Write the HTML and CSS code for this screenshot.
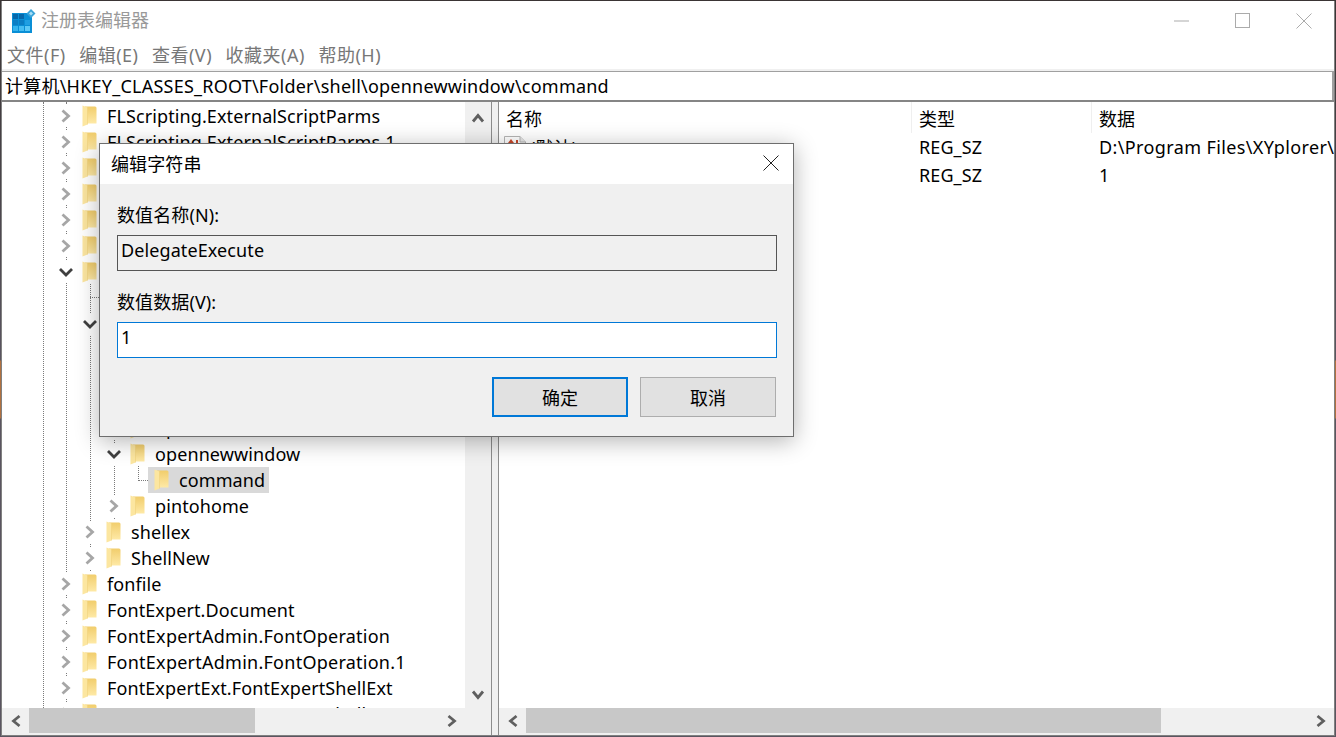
FILE: index.html
```html
<!DOCTYPE html>
<html lang="zh-CN">
<head>
<meta charset="utf-8">
<title>注册表编辑器</title>
<link rel="stylesheet" href="styles.css">
</head>
<body>
<svg class="defs" width="0" height="0" aria-hidden="true">
  <defs>
    <linearGradient id="fb" x1="0" y1="0" x2="0" y2="1"><stop offset="0" stop-color="#f1cd6c"/><stop offset="1" stop-color="#fee9a6"/></linearGradient>
    <symbol id="folder" viewBox="0 0 15 22">
      <path d="M3 1.500H13Q14.500 1.500 14.500 3V18.500H3Z" fill="url(#fb)"/>
      <path d="M.5 .5L5.500 2.500V19.500L.5 21.500Z" fill="#fce6a0"/>
      <path d="M5.500 2.500V19.500" stroke="#f0d27c" stroke-width=".6" fill="none"/>
    </symbol>
    <symbol id="right" viewBox="0 0 12 14"><path d="M2.500 1.500L8.500 7L2.500 12.500" fill="none" stroke="#a6a6a6" stroke-width="2.800"/></symbol>
    <symbol id="down" viewBox="0 0 16 10"><path d="M2 2L8 8L14 2" fill="none" stroke="#404040" stroke-width="2.800"/></symbol>
    <symbol id="sb-l" viewBox="0 0 12 14"><path d="M9.500 2L3.500 7L9.500 12" fill="none" stroke="#5f5f5f" stroke-width="2.800"/></symbol>
    <symbol id="sb-r" viewBox="0 0 12 14"><path d="M2.500 2L8.500 7L2.500 12" fill="none" stroke="#5f5f5f" stroke-width="2.800"/></symbol>
    <symbol id="sb-u" viewBox="0 0 14 12"><path d="M2 9.500L7 3.500L12 9.500" fill="none" stroke="#5f5f5f" stroke-width="2.800"/></symbol>
    <symbol id="sb-d" viewBox="0 0 14 12"><path d="M2 2.500L7 8.500L12 2.500" fill="none" stroke="#5f5f5f" stroke-width="2.800"/></symbol>
  </defs>
</svg>

<div class="window">
  <header class="titlebar">
    <svg class="appicon" viewBox="0 0 24 24" width="24" height="24">
      <rect x="0" y="4" width="20" height="20" fill="#0a8fd6"/>
      <rect x="1" y="5" width="5" height="5" fill="#0668ab"/><rect x="7" y="5" width="5" height="5" fill="#0668ab"/><rect x="13" y="5" width="5" height="5" fill="#0a8fd6"/>
      <rect x="1" y="11" width="5" height="5" fill="#0b7ec4"/><rect x="7" y="11" width="5" height="5" fill="#0b7ec4"/><rect x="13" y="11" width="5" height="5" fill="#1f9fe2"/>
      <rect x="1" y="17" width="5" height="5" fill="#35b4ee"/><rect x="7" y="17" width="5" height="5" fill="#45bdf2"/><rect x="13" y="17" width="5" height="5" fill="#5cc9f6"/>
      <path d="M19 0L23.500 4.500L19 9L14.500 4.500Z" fill="#3aa3d8"/><path d="M19 2.500L21 4.500L19 6.500L17 4.500Z" fill="#a8def5"/>
    </svg>
    <span class="apptitle">注册表编辑器</span>
    <div class="wincontrols">
      <span class="winbtn"><svg viewBox="0 0 16 16" width="16" height="16"><path d="M0 8H15" stroke="#ababab"/></svg></span>
      <span class="winbtn"><svg viewBox="0 0 16 16" width="16" height="16"><rect x=".5" y=".5" width="14" height="14" fill="none" stroke="#ababab"/></svg></span>
      <span class="winbtn"><svg viewBox="0 0 16 16" width="16" height="16"><path d="M.5 .5L15.500 15.500M15.500 .5L.5 15.500" stroke="#ababab" fill="none"/></svg></span>
    </div>
  </header>

  <nav class="menubar">
    <span class="menu">文件(F)</span>
    <span class="menu">编辑(E)</span>
    <span class="menu">查看(V)</span>
    <span class="menu">收藏夹(A)</span>
    <span class="menu">帮助(H)</span>
  </nav>

  <div class="address">计算机\HKEY_CLASSES_ROOT\Folder\shell\opennewwindow\command</div>

  <main class="panes">
    <section class="treepane">
      <div class="treebody">
        <div class="tree">
          <i class="guide g43"></i><i class="guide g66"></i><i class="guide g90"></i><i class="guide g114"></i><i class="guide g138"></i>
          <i class="hguide h298"></i><i class="hguide h481"></i>

          <div class="row l1"><span class="chev"><svg width="12" height="14"><use href="#right"/></svg></span><svg class="folder"><use href="#folder"/></svg><span class="name">FLScripting.ExternalScriptParms</span></div>
          <div class="row l1"><span class="chev"><svg width="12" height="14"><use href="#right"/></svg></span><svg class="folder"><use href="#folder"/></svg><span class="name">FLScripting.ExternalScriptParms.1</span></div>
          <div class="row l1"><span class="chev"><svg width="12" height="14"><use href="#right"/></svg></span><svg class="folder"><use href="#folder"/></svg></div>
          <div class="row l1"><span class="chev"><svg width="12" height="14"><use href="#right"/></svg></span><svg class="folder"><use href="#folder"/></svg></div>
          <div class="row l1"><span class="chev"><svg width="12" height="14"><use href="#right"/></svg></span><svg class="folder"><use href="#folder"/></svg></div>
          <div class="row l1"><span class="chev"><svg width="12" height="14"><use href="#right"/></svg></span><svg class="folder"><use href="#folder"/></svg></div>
          <div class="row l1"><span class="chev"><svg width="16" height="10"><use href="#down"/></svg></span><svg class="folder"><use href="#folder"/></svg></div>
          <div class="row l2"></div>
          <div class="row l2"><span class="chev"><svg width="16" height="10"><use href="#down"/></svg></span></div>
          <div class="row"></div>
          <div class="row"></div>
          <div class="row"></div>
          <div class="row l3"><span class="chev"></span><svg class="folder"><use href="#folder"/></svg><span class="name">open</span></div>
          <div class="row l3"><span class="chev"><svg width="16" height="10"><use href="#down"/></svg></span><svg class="folder"><use href="#folder"/></svg><span class="name">opennewwindow</span></div>
          <div class="row l4"><span class="sel"><svg class="folder"><use href="#folder"/></svg><span class="name">command</span></span></div>
          <div class="row l3"><span class="chev"><svg width="12" height="14"><use href="#right"/></svg></span><svg class="folder"><use href="#folder"/></svg><span class="name">pintohome</span></div>
          <div class="row l2"><span class="chev"><svg width="12" height="14"><use href="#right"/></svg></span><svg class="folder"><use href="#folder"/></svg><span class="name">shellex</span></div>
          <div class="row l2"><span class="chev"><svg width="12" height="14"><use href="#right"/></svg></span><svg class="folder"><use href="#folder"/></svg><span class="name">ShellNew</span></div>
          <div class="row l1"><span class="chev"><svg width="12" height="14"><use href="#right"/></svg></span><svg class="folder"><use href="#folder"/></svg><span class="name">fonfile</span></div>
          <div class="row l1"><span class="chev"><svg width="12" height="14"><use href="#right"/></svg></span><svg class="folder"><use href="#folder"/></svg><span class="name">FontExpert.Document</span></div>
          <div class="row l1"><span class="chev"><svg width="12" height="14"><use href="#right"/></svg></span><svg class="folder"><use href="#folder"/></svg><span class="name wide">FontExpertAdmin.FontOperation</span></div>
          <div class="row l1"><span class="chev"><svg width="12" height="14"><use href="#right"/></svg></span><svg class="folder"><use href="#folder"/></svg><span class="name wide">FontExpertAdmin.FontOperation.1</span></div>
          <div class="row l1"><span class="chev"><svg width="12" height="14"><use href="#right"/></svg></span><svg class="folder"><use href="#folder"/></svg><span class="name">FontExpertExt.FontExpertShellExt</span></div>
          <div class="row l1"><span class="chev"><svg width="12" height="14"><use href="#right"/></svg></span><svg class="folder"><use href="#folder"/></svg><span class="name">FontExpertExt.FontExpertShellExt.1</span></div>
        </div>
        <div class="vscroll">
          <svg width="14" height="12"><use href="#sb-u"/></svg>
          <svg width="14" height="12"><use href="#sb-d"/></svg>
        </div>
      </div>
      <div class="hscroll hscroll-tree">
        <span class="sbarrow"><svg width="12" height="14"><use href="#sb-l"/></svg></span>
        <span class="track"><span class="thumb tree-thumb"></span></span>
        <span class="sbarrow"><svg width="12" height="14"><use href="#sb-r"/></svg></span>
      </div>
    </section>

    <div class="splitter"></div>

    <section class="listpane">
      <div class="list">
        <div class="lrow head">
          <span class="cell">名称</span><span class="cell">类型</span><span class="cell">数据</span>
        </div>
        <div class="lrow">
          <span class="cell icell">
            <svg class="regicon" viewBox="0 0 22 22" width="22" height="22">
              <path d="M.5 .5H16L21.500 6V21.500H.5Z" fill="#fff" stroke="#b5b5b5"/>
              <path d="M16 .5V6H21.500" fill="#e8e8e8" stroke="#b5b5b5"/>
              <path d="M4 7L7 3L10 7ZM12 4H14V8H12Z" fill="#c9482a"/>
            </svg>
            <span>(默认)</span>
          </span>
          <span class="cell">REG_SZ</span>
          <span class="cell path">D:\Program Files\XYplorer\XYplorer.exe</span>
        </div>
        <div class="lrow">
          <span class="cell icell">
            <svg class="regicon" viewBox="0 0 22 22" width="22" height="22">
              <path d="M.5 .5H16L21.500 6V21.500H.5Z" fill="#fff" stroke="#b5b5b5"/>
            </svg>
            <span>DelegateExecute</span>
          </span>
          <span class="cell">REG_SZ</span>
          <span class="cell">1</span>
        </div>
      </div>
      <div class="hscroll">
        <span class="sbarrow"><svg width="12" height="14"><use href="#sb-l"/></svg></span>
        <span class="track"><span class="thumb list-thumb"></span></span>
        <span class="sbarrow"><svg width="12" height="14"><use href="#sb-r"/></svg></span>
      </div>
    </section>
  </main>
</div>

<div class="dialog" role="dialog">
  <div class="dlgtitle">
    <span>编辑字符串</span>
    <svg class="dlgclose" viewBox="0 0 16 16" width="16" height="16"><path d="M.5 .5L15.500 15.500M15.500 .5L.5 15.500" stroke="#222" fill="none"/></svg>
  </div>
  <div class="dlgbody">
    <div class="label first">数值名称(N):</div>
    <div class="field readonly">DelegateExecute</div>
    <div class="label second">数值数据(V):</div>
    <div class="field active">1</div>
    <div class="buttons">
      <span class="btn primary">确定</span>
      <span class="btn">取消</span>
    </div>
  </div>
</div>
</body>
</html>
```

FILE: styles.css
```css
* { box-sizing: border-box; }
html, body { margin: 0; padding: 0; height: 100%; overflow: hidden; }
body {
  position: relative;
  width: 1336px;
  height: 737px;
  font-family: "Noto Sans", "Noto Sans CJK SC", sans-serif;
  font-size: 18px;
  letter-spacing: .1px;
  color: #000;
  background: linear-gradient(to bottom, #3a3434 0, #5a5560 360px, #b0703f 361px, #b0703f 418px, #5a5560 419px);
  padding: 1px 1px 1px 1px;
}
.defs { position: absolute; }
.window {
  width: 1334px;
  height: 735px;
  background: #fff;
  border-left: 1px solid #808080;
  border-right: 1px solid #808080;
  border-bottom: 1px solid #808080;
  display: flex;
  flex-direction: column;
}
.titlebar { height: 36px; flex: none; display: flex; align-items: center; padding-left: 10px; }
.appicon { flex: none; margin-top: 3px; }
.apptitle { margin-left: 5px; color: #999; font-family: "Noto Sans CJK SC", sans-serif; letter-spacing: 0; }
.wincontrols { margin-left: auto; display: flex; }
.winbtn { width: 61px; height: 36px; display: flex; align-items: center; justify-content: center; margin-top: 4px; }
.menubar { height: 32px; flex: none; display: flex; padding: 2px 0 0 5px; align-items: center; color: #777; letter-spacing: .5px; }
.menu { margin-right: 13.5px; }
.address {
  height: 33px; flex: none;
  border-top: 2px solid #f0f0f0;
  border-bottom: 2px solid #858585;
  box-shadow: inset 0 1px 0 #a0a0a0, inset -2px 0 0 #a0a0a0;
  padding: 0 3px;
  line-height: 31px;
  letter-spacing: .23px;
  white-space: nowrap;
}
.panes { flex: 1; min-height: 0; display: flex; }
.treepane { width: 489px; flex: none; display: flex; flex-direction: column; }
.treebody { flex: 1; min-height: 0; display: flex; }
.tree { position: relative; flex: 1; min-width: 0; overflow: hidden; padding-top: 1px; }
.vscroll { width: 26px; flex: none; background: #f0f0f0; display: flex; flex-direction: column; justify-content: space-between; align-items: center; padding: 10px 0 7px; }
.guide { position: absolute; width: 0; border-left: 1px dotted #7a7a7a; }
.hguide { position: absolute; height: 0; border-top: 1px dotted #7a7a7a; }
.g43 { left: 41px; top: 0; bottom: 0; }
.g66 { left: 64px; top: 0; bottom: 0; }
.g90 { left: 88px; top: 182px; height: 287px; }
.g114 { left: 112px; top: 234px; height: 183px; }
.g138 { left: 136px; top: 364px; height: 15px; }
.h298 { left: 88px; top: 195px; width: 9px; }
.h481 { left: 136px; top: 378px; width: 10px; }
.row { position: relative; height: 26px; display: flex; align-items: center; white-space: nowrap; }
.l1 { padding-left: 54px; }
.l2 { padding-left: 78px; }
.l3 { padding-left: 102px; }
.l4 { padding-left: 146px; }
.chev { width: 20px; height: 22px; flex: none; background: #fff; display: flex; align-items: center; justify-content: center; }
.folder { width: 15px; height: 22px; flex: none; margin-left: 6px; }
.name { margin-left: 10px; }
.name.wide { letter-spacing: .25px; }
.sel { height: 26px; display: flex; align-items: center; background: #d9d9d9; padding-right: 4px; }
.hscroll { height: 27px; flex: none; display: flex; background: #f0f0f0; padding-bottom: 2px; }
.hscroll-tree { padding-right: 26px; }
.sbarrow { width: 27px; flex: none; display: flex; align-items: center; justify-content: center; }
.track { flex: 1; min-width: 0; display: flex; }
.thumb { display: block; background: #c8c8c8; height: 25px; }
.tree-thumb { width: 226px; }
.list-thumb { width: 635px; }
.splitter { width: 8px; flex: none; background: #f0f0f0; border-left: 1px solid #8c8c8c; border-right: 1px solid #8c8c8c; }
.listpane { flex: 1; min-width: 0; display: flex; flex-direction: column; }
.list { flex: 1; min-height: 0; overflow: hidden; }
.lrow { display: grid; grid-template-columns: 413px 180px 1fr; height: 28px; align-items: center; }
.lrow.head { height: 31px; }
.cell { padding-left: 7px; white-space: nowrap; overflow: hidden; }
.cell.path { letter-spacing: .38px; }
.head .cell { height: 31px; line-height: 34px; border-right: 1px solid #efefef; }
.head .cell:last-child { border-right: 0; }
.icell { padding-left: 5px; display: flex; align-items: center; gap: 4px; }
.regicon { flex: none; }

.dialog {
  position: absolute;
  left: 99px; top: 143px;
  width: 695px; height: 294px;
  border: 1px solid #6e6e6e;
  background: #f0f0f0;
  box-shadow: 0 4px 22px rgba(0,0,0,.3);
  display: flex; flex-direction: column;
}
.dlgtitle { height: 40px; flex: none; background: #fff; display: flex; align-items: center; justify-content: space-between; padding: 0 14px 3px 11px; }
.dlgbody { flex: 1; padding: 0 16px 0 17px; }
.label { line-height: 26px; height: 26px; }
.label.first { margin-top: 18px; }
.label.second { margin-top: 18px; }
.field { height: 36px; line-height: 28px; padding-left: 3px; margin-top: 7px; }
.field.readonly { border: 1px solid #555; background: #f0f0f0; }
.field.active { border: 1px solid #0078d7; background: #fff; }
.buttons { display: flex; justify-content: flex-end; gap: 12px; margin-top: 19px; padding-right: 1px; }
.btn { width: 136px; height: 40px; display: flex; align-items: center; justify-content: center; background: #e1e1e1; border: 1px solid #adadad; }
.btn.primary { border: 2px solid #0078d7; }
```
